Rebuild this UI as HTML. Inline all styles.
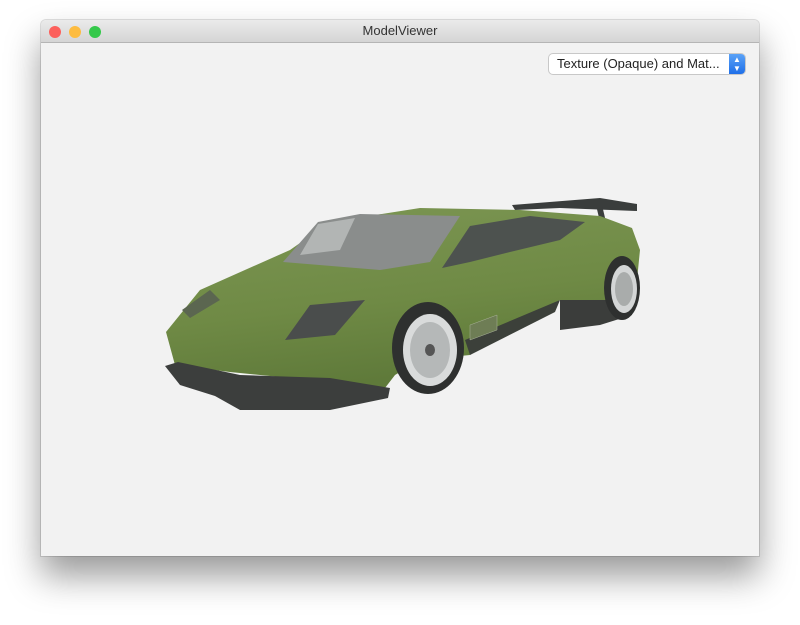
<!DOCTYPE html>
<html><head><style>
html,body{margin:0;padding:0;width:800px;height:625px;background:#fff;overflow:hidden;font-family:"Liberation Sans",sans-serif}
.win{position:absolute;left:41px;top:20px;width:718px;height:536px;background:#f2f2f2;border-radius:5px 5px 0 0;box-shadow:0 20px 35px rgba(0,0,0,0.4),0 0 0 1px rgba(0,0,0,0.12);overflow:hidden}
.tb{height:22px;background:linear-gradient(#ebebeb,#d5d5d5);border-bottom:1px solid #b5b5b5;text-align:center;font-size:13px;line-height:22px;color:#333}
.dot{position:absolute;top:6px;width:12px;height:12px;border-radius:50%}
.sel{position:absolute;left:508px;top:34px;width:196px;height:20px;background:#fff;border-radius:4px;box-shadow:0 0 0 1px #c8c8c8;font-size:13px;line-height:20px;color:#222;padding-left:8px;box-sizing:border-box}
.arr{position:absolute;right:0;top:0;width:16px;height:20px;background:linear-gradient(#5aa2f7,#1f6fe8);border-radius:0 4px 4px 0;color:#fff;font-size:8px;line-height:9px;text-align:center;padding-top:1px;box-sizing:border-box}
</style></head><body>
<div class="win">
<div class="tb">ModelViewer</div>
<div class="dot" style="left:8px;background:#fc605c"></div>
<div class="dot" style="left:28px;background:#fdbc40"></div>
<div class="dot" style="left:48px;background:#34c84a"></div>
<div class="sel">Texture (Opaque) and Mat...<div class="arr">▲<br>▼</div></div>
</div>
<svg width="800" height="625" style="position:absolute;left:0;top:0">
<defs>
<linearGradient id="g" x1="0" y1="0" x2="0.3" y2="1"><stop offset="0" stop-color="#7c9653"/><stop offset="0.6" stop-color="#6f8a45"/><stop offset="1" stop-color="#5f7a3a"/></linearGradient>
</defs>
<polygon points="512,205 600,198 637,204 637,211 560,208 515,210" fill="#3a3d3c"/>
<polygon points="596,205 602,205 606,222 600,222" fill="#3a3d3c"/>
<polygon points="560,300 630,290 632,315 600,325 560,330" fill="#3b3d3b"/>
<polygon points="166,332 200,290 290,250 330,222 420,208 520,210 600,216 632,228 640,250 635,300 610,300 560,300 500,330 470,355 420,360 395,375 385,388 310,380 230,372 175,365" fill="url(#g)"/>
<polygon points="165,366 178,362 240,375 330,378 390,388 388,398 330,410 240,410 215,396 180,385" fill="#3c3e3d"/>
<polygon points="283,262 318,222 360,214 460,216 430,262 380,270" fill="#8a8d8c"/>
<polygon points="318,224 355,218 340,250 300,255" fill="#b2b5b4"/>
<polygon points="442,268 470,226 530,216 585,222 560,240 510,252 470,262" fill="#4d524f"/>
<polygon points="285,340 310,305 365,300 335,335" fill="#4a4d4c"/>
<polygon points="182,310 210,290 220,300 190,318" fill="#5b6650"/>
<polygon points="465,340 560,300 555,312 470,355" fill="#3c403a"/>
<ellipse cx="428" cy="348" rx="36" ry="46" fill="#2e302f"/>
<ellipse cx="430" cy="350" rx="27" ry="36" fill="#d9dbdb"/>
<ellipse cx="430" cy="350" rx="20" ry="28" fill="#b5b8b8"/>
<ellipse cx="430" cy="350" rx="5" ry="6" fill="#555"/>
<ellipse cx="622" cy="288" rx="18" ry="32" fill="#2e302f"/>
<ellipse cx="624" cy="289" rx="13" ry="24" fill="#d4d6d6"/>
<ellipse cx="624" cy="289" rx="9" ry="17" fill="#a9acab"/>
<polygon points="470,325 497,315 497,330 470,340" fill="#6e7d55" stroke="#aab39a" stroke-width="0.5"/>
</svg>
</body></html>
